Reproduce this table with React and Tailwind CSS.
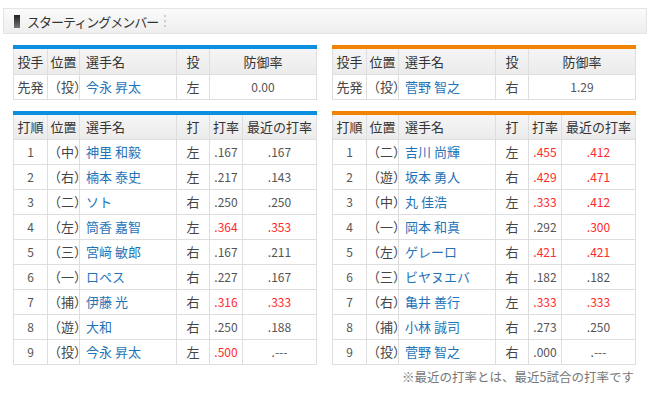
import React from 'react';

const pitchers = [
  { role: '先発', pos: '（投）', name: '今永 昇太', hand: '左', era: '0.00' },
  { role: '先発', pos: '（投）', name: '菅野 智之', hand: '右', era: '1.29' },
];

const lineups = [
  [
    ['1', '（中）', '神里 和毅', '左', '.167', '.167', false, false],
    ['2', '（右）', '楠本 泰史', '左', '.217', '.143', false, false],
    ['3', '（二）', 'ソト', '右', '.250', '.250', false, false],
    ['4', '（左）', '筒香 嘉智', '左', '.364', '.353', true, true],
    ['5', '（三）', '宮﨑 敏郎', '右', '.167', '.211', false, false],
    ['6', '（一）', 'ロペス', '右', '.227', '.167', false, false],
    ['7', '（捕）', '伊藤 光', '右', '.316', '.333', true, true],
    ['8', '（遊）', '大和', '右', '.250', '.188', false, false],
    ['9', '（投）', '今永 昇太', '左', '.500', '.---', true, false],
  ],
  [
    ['1', '（二）', '吉川 尚輝', '左', '.455', '.412', true, true],
    ['2', '（遊）', '坂本 勇人', '右', '.429', '.471', true, true],
    ['3', '（中）', '丸 佳浩', '左', '.333', '.412', true, true],
    ['4', '（一）', '岡本 和真', '右', '.292', '.300', false, true],
    ['5', '（左）', 'ゲレーロ', '右', '.421', '.421', true, true],
    ['6', '（三）', 'ビヤヌエバ', '右', '.182', '.182', false, false],
    ['7', '（右）', '亀井 善行', '左', '.333', '.333', true, true],
    ['8', '（捕）', '小林 誠司', '右', '.273', '.250', false, false],
    ['9', '（投）', '菅野 智之', '右', '.000', '.---', false, false],
  ],
];

const th = 'h-[25px] border border-t-0 border-[#dedede] bg-gradient-to-b from-[#f5f5f5] to-[#ebebeb] font-normal text-[#333] text-[13px] text-center p-0';
const td = 'h-[25px] border border-[#dedede] bg-white text-center p-0';
const jp = `${td} text-[13px] text-[#444]`;
const name = `${td} text-[13px] text-left pl-[6px] text-[#1f74b8]`;
const num = (hot) => `${td} text-[12px] ${hot ? 'text-[#ff2a2a]' : 'text-[#555]'}`;

function PitcherTable({ p, bar }) {
  return (
    <div className="w-[304px]">
      <div className={`h-[4px] ${bar}`}></div>
      <table className="w-full table-fixed border-collapse">
        <colgroup>
          <col className="w-[34px]" />
          <col className="w-[32px]" />
          <col className="w-[97px]" />
          <col className="w-[33px]" />
          <col />
        </colgroup>
        <thead>
          <tr>
            <th className={th}>投手</th>
            <th className={th}>位置</th>
            <th className={`${th} text-left pl-[6px]`}>選手名</th>
            <th className={th}>投</th>
            <th className={th}>防御率</th>
          </tr>
        </thead>
        <tbody>
          <tr>
            <td className={jp}>{p.role}</td>
            <td className={jp}>{p.pos}</td>
            <td className={name}>{p.name}</td>
            <td className={jp}>{p.hand}</td>
            <td className={num(false)}>{p.era}</td>
          </tr>
        </tbody>
      </table>
    </div>
  );
}

function BattingTable({ rows, bar }) {
  return (
    <div className="w-[304px]">
      <div className={`h-[4px] ${bar}`}></div>
      <table className="w-full table-fixed border-collapse">
        <colgroup>
          <col className="w-[34px]" />
          <col className="w-[32px]" />
          <col className="w-[97px]" />
          <col className="w-[33px]" />
          <col className="w-[33px]" />
          <col />
        </colgroup>
        <thead>
          <tr>
            <th className={th}>打順</th>
            <th className={th}>位置</th>
            <th className={`${th} text-left pl-[6px]`}>選手名</th>
            <th className={th}>打</th>
            <th className={th}>打率</th>
            <th className={th}>最近の打率</th>
          </tr>
        </thead>
        <tbody>
          {rows.map((r) => (
            <tr key={r[0]}>
              <td className={num(false)}>{r[0]}</td>
              <td className={jp}>{r[1]}</td>
              <td className={name}>{r[2]}</td>
              <td className={jp}>{r[3]}</td>
              <td className={num(r[6])}>{r[4]}</td>
              <td className={num(r[7])}>{r[5]}</td>
            </tr>
          ))}
        </tbody>
      </table>
    </div>
  );
}

export default function App() {
  return (
    <div className="w-[650px] h-[394px] bg-white overflow-hidden font-['Noto_Sans_CJK_JP','Noto_Sans',sans-serif]">
      {/* Section title */}
      <div className="pt-[8px] pl-[3px] pr-[3px]">
        <div className="h-[26px] flex items-center border border-[#e4e4e4] bg-gradient-to-b from-[#fbfbfb] to-[#eeeeee] pl-[10px]">
          <div className="w-[6px] h-[13px] bg-gradient-to-b from-[#222] to-[#777]"></div>
          <span className="ml-[7px] text-[13px] tracking-[-1px] text-[#333] leading-none">スターティングメンバー</span>
          <div className="ml-[6px] flex flex-col gap-[3px]">
            <span className="w-[2px] h-[2px] bg-[#ccc]"></span>
            <span className="w-[2px] h-[2px] bg-[#ccc]"></span>
            <span className="w-[2px] h-[2px] bg-[#ccc]"></span>
          </div>
        </div>
      </div>

      {/* Starting pitchers */}
      <div className="flex gap-[15px] pl-[13px] mt-[11px]">
        <PitcherTable p={pitchers[0]} bar="bg-[#0b8fe0]" />
        <PitcherTable p={pitchers[1]} bar="bg-[#f08300]" />
      </div>

      {/* Batting order */}
      <div className="flex gap-[15px] pl-[13px] mt-[11px]">
        <BattingTable rows={lineups[0]} bar="bg-[#0b8fe0]" />
        <BattingTable rows={lineups[1]} bar="bg-[#f08300]" />
      </div>

      <p className="text-right pr-[16px] mt-[3px] text-[12.5px] text-[#777]">※最近の打率とは、最近5試合の打率です</p>
    </div>
  );
}
